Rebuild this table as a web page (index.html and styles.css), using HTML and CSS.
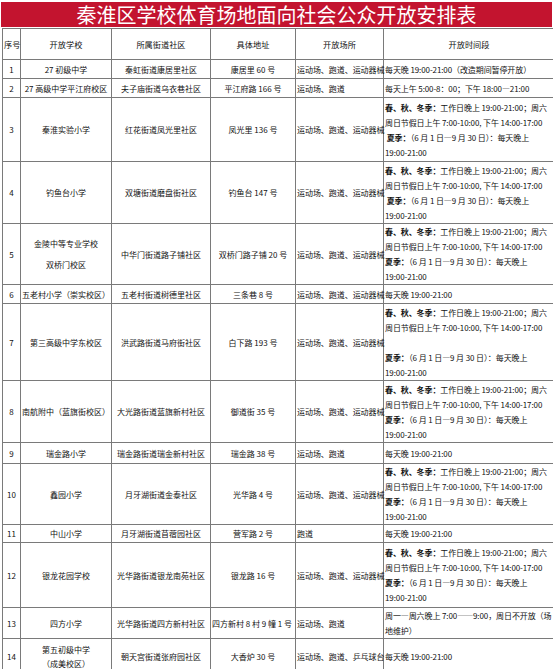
FILE: index.html
```html
<!DOCTYPE html>
<html lang="zh-CN">
<head>
<meta charset="utf-8">
<title>秦淮区学校体育场地面向社会公众开放安排表</title>
<link rel="stylesheet" href="styles.css">
</head>
<body>
<div class="page">
  <h1 class="title">秦淮区学校体育场地面向社会公众开放安排表</h1>
  <table class="sheet">
    <colgroup>
      <col class="c-no"><col class="c-school"><col class="c-comm"><col class="c-addr"><col class="c-place"><col class="c-time">
    </colgroup>
    <thead>
      <tr class="h31">
        <th>序号</th><th>开放学校</th><th>所属街道社区</th><th>具体地址</th><th>开放场所</th><th class="time">开放时间段</th>
      </tr>
    </thead>
    <tbody>
      <tr class="h19">
        <td>1</td><td>27 初级中学</td><td>秦虹街道康居里社区</td><td>康居里 60 号</td><td class="place">运动场、跑道、运动器械</td><td class="time">每天晚 19:00-21:00（改造期间暂停开放）</td>
      </tr>
      <tr class="h19">
        <td>2</td><td>27 高级中学平江府校区</td><td>夫子庙街道乌衣巷社区</td><td>平江府路 166 号</td><td class="place">运动场、跑道</td><td class="time">每天上午 5:00-8：00；下午 18:00—21:00</td>
      </tr>
      <tr class="h64">
        <td>3</td><td>秦淮实验小学</td><td>红花街道凤光里社区</td><td>凤光里 136 号</td><td class="place">运动场、跑道、运动器械</td>
        <td class="time"><b>春、秋、冬季：</b>工作日晚上 19:00-21:00；周六<br>周日节假日上午 7:00-10:00, 下午 14:00-17:00<br>&nbsp;<b>夏季：</b>（6 月 1 日—9 月 30 日）：每天晚上<br>19:00-21:00</td>
      </tr>
      <tr class="h62">
        <td>4</td><td>钓鱼台小学</td><td>双塘街道磨盘街社区</td><td>钓鱼台 147 号</td><td class="place">运动场、跑道、运动器械</td>
        <td class="time"><b>春、秋、冬季：</b>工作日晚上 19:00-21:00；周六<br>周日节假日上午 7:00-10:00, 下午 14:00-17:00<br>&nbsp;<b>夏季：</b>（6 月 1 日—9 月 30 日）：每天晚上<br>19:00-21:00</td>
      </tr>
      <tr class="h61">
        <td>5</td><td class="two">金陵中等专业学校<br>双桥门校区</td><td>中华门街道路子铺社区</td><td>双桥门路子铺 20 号</td><td class="place">运动场、跑道、运动器械</td>
        <td class="time"><b>春、秋、冬季：</b>工作日晚上 19:00-21:00；周六<br>周日节假日上午 7:00-10:00, 下午 14:00-17:00<br><b>夏季：</b>（6 月 1 日—9 月 30 日）：每天晚上<br>19:00-21:00</td>
      </tr>
      <tr class="h19">
        <td>6</td><td>五老村小学（崇实校区）</td><td>五老村街道树德里社区</td><td>三条巷 8 号</td><td class="place">运动场、跑道、运动器械</td><td class="time">每天晚 19:00-21:00</td>
      </tr>
      <tr class="h77">
        <td>7</td><td>第三高级中学东校区</td><td>洪武路街道马府街社区</td><td>白下路 193 号</td><td class="place">运动场、跑道、运动器械</td>
        <td class="time"><b>春、秋、冬季：</b>工作日晚上 19:00-21:00；周六<br>周日节假日上午 7:00-10:00, 下午 14:00-17:00<br>&nbsp;<br><b>夏季：</b>（6 月 1 日—9 月 30 日）：每天晚上<br>19:00-21:00</td>
      </tr>
      <tr class="h62">
        <td>8</td><td>南航附中（蓝旗街校区）</td><td>大光路街道蓝旗新村社区</td><td>御道街 35 号</td><td class="place">运动场、跑道、运动器械</td>
        <td class="time"><b>春、秋、冬季：</b>工作日晚上 19:00-21:00；周六<br>周日节假日上午 7:00-10:00, 下午 14:00-17:00<br><b>夏季：</b>（6 月 1 日—9 月 30 日）：每天晚上<br>19:00-21:00</td>
      </tr>
      <tr class="h21">
        <td>9</td><td>瑞金路小学</td><td>瑞金路街道瑞金新村社区</td><td>瑞金路 38 号</td><td class="place">运动场、跑道</td><td class="time">每天晚 19:00-21:00</td>
      </tr>
      <tr class="h59">
        <td>10</td><td>鑫园小学</td><td>月牙湖街道金泰社区</td><td>光华路 4 号</td><td class="place">运动场、跑道、运动器械</td>
        <td class="time"><b>春、秋、冬季：</b>工作日晚上 19:00-21:00；周六<br>周日节假日上午 7:00-10:00, 下午 14:00-17:00<br><b>夏季：</b>（6 月 1 日—9 月 30 日）：每天晚上<br>19:00-21:00</td>
      </tr>
      <tr class="h18">
        <td>11</td><td>中山小学</td><td>月牙湖街道苜蓿园社区</td><td>营军路 2 号</td><td class="place">跑道</td><td class="time">每天晚 19:00-21:00</td>
      </tr>
      <tr class="h65">
        <td>12</td><td>银龙花园学校</td><td>光华路街道银龙南苑社区</td><td>银龙路 16 号</td><td class="place">运动场、跑道、运动器械</td>
        <td class="time"><b>春、秋、冬季：</b>工作日晚上 19:00-21:00；周六<br>周日节假日上午 7:00-10:00, 下午 14:00-17:00<br><b>夏季：</b>（6 月 1 日—9 月 30 日）：每天晚上<br>19:00-21:00</td>
      </tr>
      <tr class="h31">
        <td>13</td><td>四方小学</td><td>光华路街道四方新村社区</td><td class="spill">四方新村 8 村 9 幢 1 号</td><td class="place">运动场、跑道</td>
        <td class="time">周一—周六晚上 7:00——9:00，周日不开放（场<br>地维护）</td>
      </tr>
      <tr class="h36">
        <td>14</td><td class="tight">第五初级中学<br>（成美校区）</td><td>朝天宫街道张府园社区</td><td>大香炉 30 号</td><td class="place">运动场、跑道、乒乓球台</td><td class="time">每天晚 19:00-21:00</td>
      </tr>
    </tbody>
  </table>
</div>
</body>
</html>
```
FILE: styles.css
```css
html, body {
  margin: 0;
  padding: 0;
  background: #ffffff;
  overflow: hidden;
}

.page {
  width: 553px;
  padding-top: 2px;
  font-family: "Noto Sans CJK SC", "Noto Sans", sans-serif;
  color: #111111;
}

.title {
  margin: 0 0 1px 1px;
  width: 551px;
  height: 25px;
  background: #c3142f;
  color: #ffffff;
  font-size: 20px;
  font-weight: normal;
  line-height: 25px;
  text-align: center;
  white-space: nowrap;
}

.sheet {
  margin-left: 2px;
  border-collapse: collapse;
  table-layout: fixed;
  width: 552px;
  font-size: 8px;
  line-height: 15px;
}

.c-no { width: 18px; }
.c-school { width: 91px; }
.c-comm { width: 99px; }
.c-addr { width: 85px; }
.c-place { width: 88px; }
.c-time { width: 171px; }

.sheet th,
.sheet td {
  border: 1px solid #7a7a7a;
  padding: 0 1px;
  text-align: center;
  vertical-align: middle;
  white-space: nowrap;
  overflow: visible;
}

.sheet th {
  font-weight: normal;
  font-size: 8.2px;
}

.sheet td.place {
  text-align: left;
  padding-left: 1px;
  padding-right: 0;
  letter-spacing: -0.05px;
}

.sheet .time {
  border-left: 1px solid #2e2e2e;
}

.sheet td.time {
  text-align: left;
  padding-left: 1px;
  letter-spacing: -0.1px;
}

.sheet th.time {
  text-align: center;
}

.sheet td.time b {
  font-weight: bold;
}

.sheet td.two {
  line-height: 21px;
}

.sheet td.tight {
  line-height: 14px;
}

.sheet td.spill {
  text-align: left;
  padding-left: 1px;
}

.h18 { height: 18px; }
.h19 { height: 19px; }
.h21 { height: 21px; }
.h31 { height: 31px; }
.h36 { height: 36px; }
.h59 { height: 59px; }
.h61 { height: 61px; }
.h62 { height: 62px; }
.h64 { height: 64px; }
.h65 { height: 65px; }
.h77 { height: 77px; }
```
